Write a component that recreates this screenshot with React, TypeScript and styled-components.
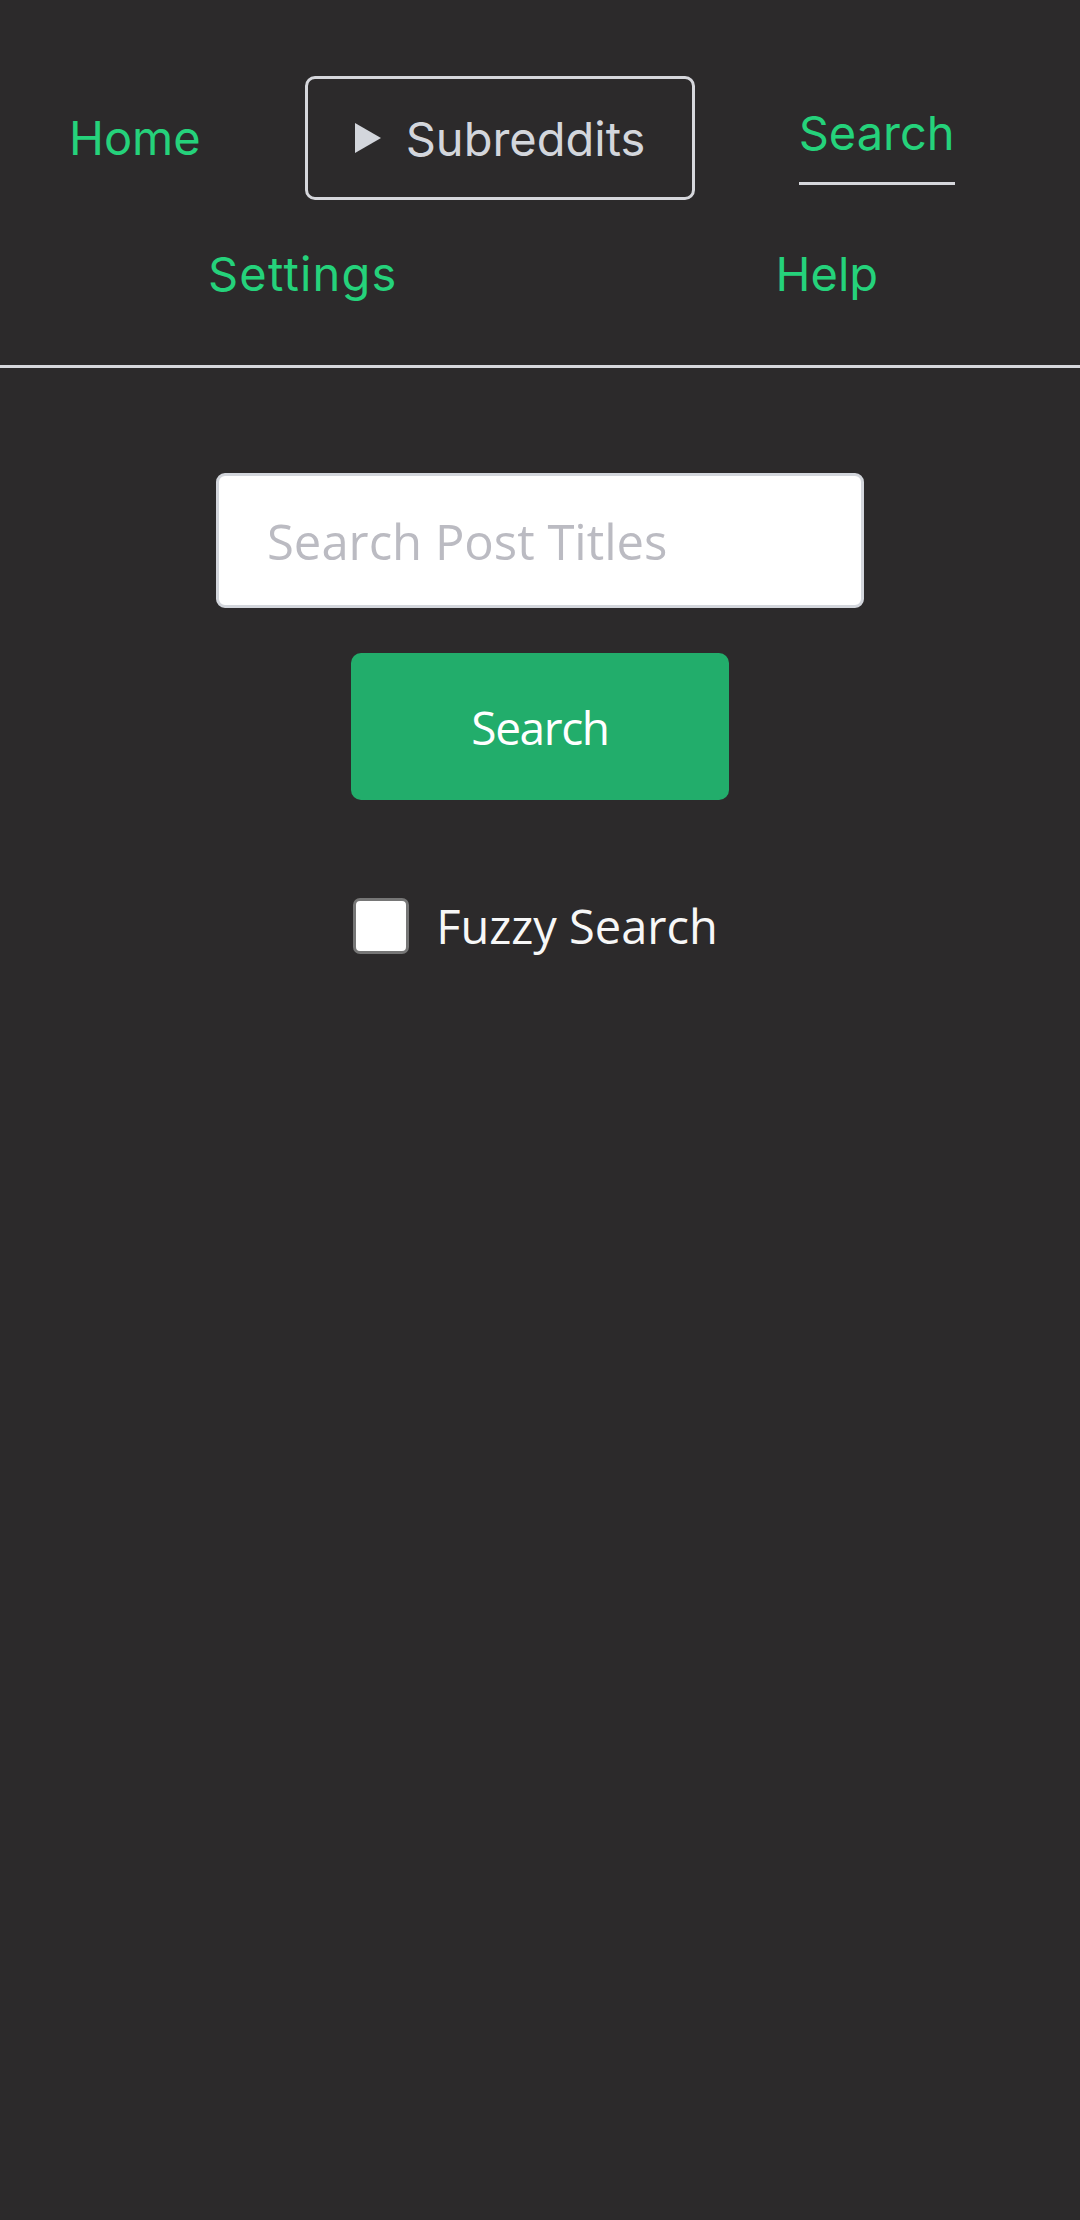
import React from "react";
import styled, { createGlobalStyle } from "styled-components";

const GlobalStyle = createGlobalStyle`
  html, body {
    margin: 0;
    padding: 0;
    background: #2c2a2b;
  }
  body {
    font-family: "Open Sans", "Noto Sans", sans-serif;
    min-height: 2220px;
  }
  * { box-sizing: border-box; }
`;

const NAV_FONT = `"Inter", "Noto Sans", sans-serif`;

const Header = styled.header`
  padding-top: 76px;
  border-bottom: 3px solid #d6d7dc;
`;

const NavRow = styled.nav<{ $pad: string; $gap: number }>`
  display: flex;
  align-items: flex-start;
  padding: ${(p) => p.$pad};
  gap: ${(p) => p.$gap}px;
`;

const NavLink = styled.a<{ $active?: boolean; $offset?: number; $spacing?: number }>`
  font-family: ${NAV_FONT};
  font-size: 47px;
  line-height: 70px;
  letter-spacing: ${(p) => p.$spacing ?? 0}px;
  color: #25d27b;
  text-decoration: none;
  margin-top: ${(p) => p.$offset ?? 0}px;
  padding-bottom: ${(p) => (p.$active ? "14px" : "0")};
  border-bottom: ${(p) => (p.$active ? "3px solid #d6d7dc" : "none")};
  cursor: pointer;
`;

const Dropdown = styled.details`
  border: 3px solid #d6d7dc;
  border-radius: 10px;
  height: 124px;
  width: 390px;
`;

const Summary = styled.summary`
  list-style: none;
  display: flex;
  align-items: center;
  height: 118px;
  padding-left: 47px;
  gap: 25px;
  font-family: ${NAV_FONT};
  font-size: 47px;
  color: #d3d6dc;
  cursor: pointer;
  &::-webkit-details-marker { display: none; }
`;

const Caret = styled.svg`
  width: 26px;
  height: 30px;
  flex: none;
`;

const Main = styled.main`
  display: flex;
  flex-direction: column;
  align-items: center;
  padding-top: 105px;
`;

const SearchInput = styled.input`
  width: 60%;
  height: 135px;
  border: 3px solid #d3d6dc;
  border-radius: 9px;
  background: #ffffff;
  padding: 0 48px;
  font-family: "Open Sans", sans-serif;
  font-size: 49px;
  color: #333;
  outline: none;
  &::placeholder { color: #bbbbc2; }
`;

const SearchButton = styled.button`
  margin-top: 45px;
  width: 35%;
  height: 147px;
  border: none;
  border-radius: 10px;
  background: #22ad6b;
  color: #ffffff;
  font-family: "Open Sans", sans-serif;
  font-size: 46px;
  letter-spacing: -1.4px;
  cursor: pointer;
`;

const CheckRow = styled.label`
  margin-top: 94px;
  padding-right: 9px;
  display: flex;
  align-items: center;
  gap: 27px;
  font-family: "Open Sans", sans-serif;
  font-size: 47px;
  color: #f7f7f7;
  cursor: pointer;
`;

const Check = styled.input`
  appearance: none;
  margin: 0;
  width: 56px;
  height: 56px;
  background: #ffffff;
  border: 3px solid #767676;
  border-radius: 7px;
`;

export default function App() {
  return (
    <>
      <GlobalStyle />
      <Header>
        <NavRow $pad="0 0 0 69px" $gap={104}>
          <NavLink $offset={27}>Home</NavLink>
          <Dropdown>
            <Summary>
              <Caret viewBox="0 0 26 30">
                <path d="M0 0 L26 15 L0 30 Z" fill="#d3d6dc" />
              </Caret>
              Subreddits
            </Summary>
          </Dropdown>
          <NavLink $active $offset={22}>Search</NavLink>
        </NavRow>
        <NavRow $pad="39px 0 56px 208px" $gap={378}>
          <NavLink $spacing={1.2}>Settings</NavLink>
          <NavLink>Help</NavLink>
        </NavRow>
      </Header>
      <Main>
        <SearchInput placeholder="Search Post Titles" />
        <SearchButton>Search</SearchButton>
        <CheckRow>
          <Check type="checkbox" />
          Fuzzy Search
        </CheckRow>
      </Main>
    </>
  );
}
